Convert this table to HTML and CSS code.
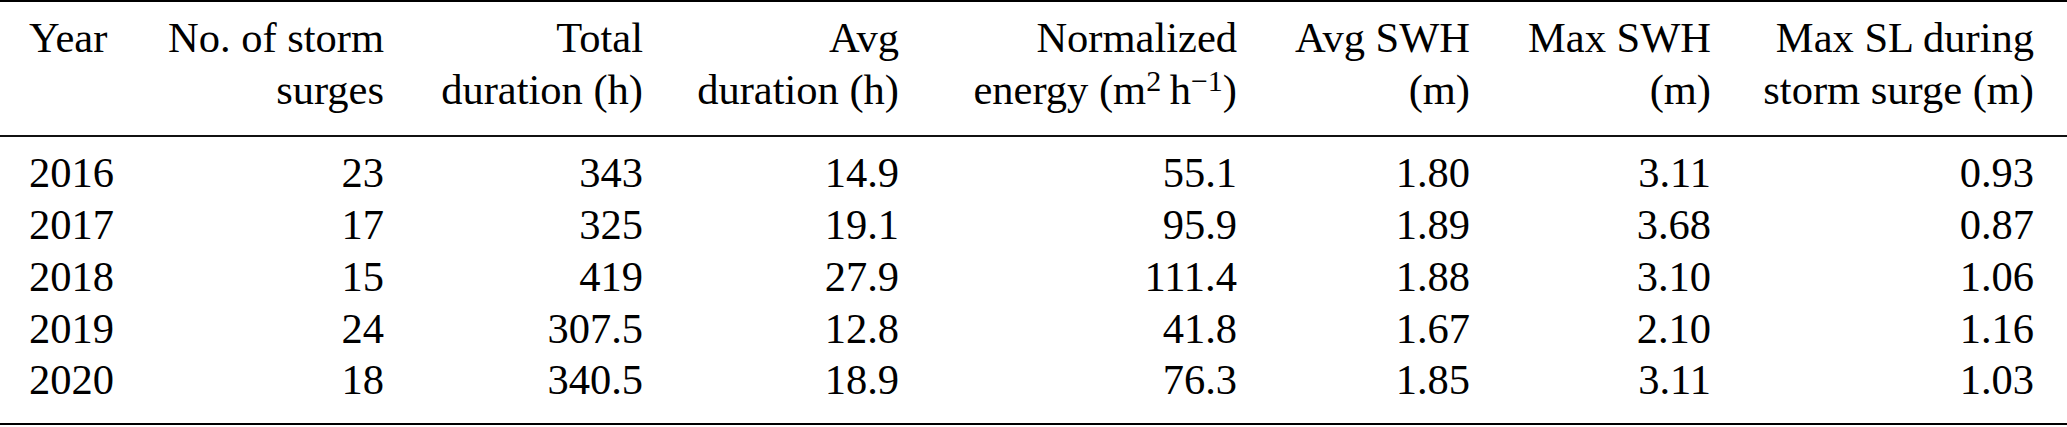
FILE: index.html
```html
<!DOCTYPE html>
<html lang="en">
<head>
<meta charset="utf-8">
<title>Storm surge statistics</title>
<link rel="stylesheet" href="styles.css">
</head>
<body>
<table class="data">
  <colgroup>
    <col class="c-year">
    <col class="c-num">
    <col class="c-tot">
    <col class="c-avg">
    <col class="c-energy">
    <col class="c-aswh">
    <col class="c-mswh">
    <col class="c-sl">
    <col class="c-pad">
  </colgroup>
  <thead>
    <tr>
      <th class="left">Year</th>
      <th>No. of storm<br>surges</th>
      <th>Total<br>duration (h)</th>
      <th>Avg<br>duration (h)</th>
      <th>Normalized<br>energy (m<sup class="sup">2</sup>&#8201;h<sup class="sup">&minus;1</sup>)</th>
      <th>Avg SWH<br>(m)</th>
      <th>Max SWH<br>(m)</th>
      <th>Max SL during<br>storm surge (m)</th>
      <th class="pad"></th>
    </tr>
  </thead>
  <tbody>
    <tr class="first">
      <td class="left">2016</td><td>23</td><td>343</td><td>14.9</td><td>55.1</td><td>1.80</td><td>3.11</td><td>0.93</td><td class="pad"></td>
    </tr>
    <tr>
      <td class="left">2017</td><td>17</td><td>325</td><td>19.1</td><td>95.9</td><td>1.89</td><td>3.68</td><td>0.87</td><td class="pad"></td>
    </tr>
    <tr>
      <td class="left">2018</td><td>15</td><td>419</td><td>27.9</td><td>111.4</td><td>1.88</td><td>3.10</td><td>1.06</td><td class="pad"></td>
    </tr>
    <tr>
      <td class="left">2019</td><td>24</td><td>307.5</td><td>12.8</td><td>41.8</td><td>1.67</td><td>2.10</td><td>1.16</td><td class="pad"></td>
    </tr>
    <tr class="last">
      <td class="left">2020</td><td>18</td><td>340.5</td><td>18.9</td><td>76.3</td><td>1.85</td><td>3.11</td><td>1.03</td><td class="pad"></td>
    </tr>
  </tbody>
</table>
</body>
</html>
```
FILE: styles.css
```css
html, body {
  margin: 0;
  padding: 0;
  background: #ffffff;
}

.data {
  width: 2067px;
  table-layout: fixed;
  border-collapse: collapse;
  border-spacing: 0;
  font-family: "Liberation Serif", "Times New Roman", serif;
  font-size: 42.5px;
  line-height: 51.7px;
  color: #000000;
  border-top: 2px solid #000000;
  border-bottom: 2px solid #000000;
}

.c-year { width: 120px; }
.c-num { width: 264px; }
.c-tot { width: 259px; }
.c-avg { width: 256px; }
.c-energy { width: 338px; }
.c-aswh { width: 233px; }
.c-mswh { width: 241px; }
.c-sl { width: 323px; }
.c-pad { width: 33px; }

.data th,
.data td {
  padding: 0;
  text-align: right;
  font-weight: normal;
  vertical-align: top;
  white-space: nowrap;
}

.data th {
  padding-top: 10px;
  padding-bottom: 20px;
}

.data thead tr {
  border-bottom: 2px solid #111111;
}

.data .left {
  text-align: left;
  padding-left: 29px;
}

.data tr.first td {
  padding-top: 10px;
}

.data tr.last td {
  padding-bottom: 17px;
}

.sup {
  font-size: 30px;
  line-height: 0;
  vertical-align: 13px;
}
```
